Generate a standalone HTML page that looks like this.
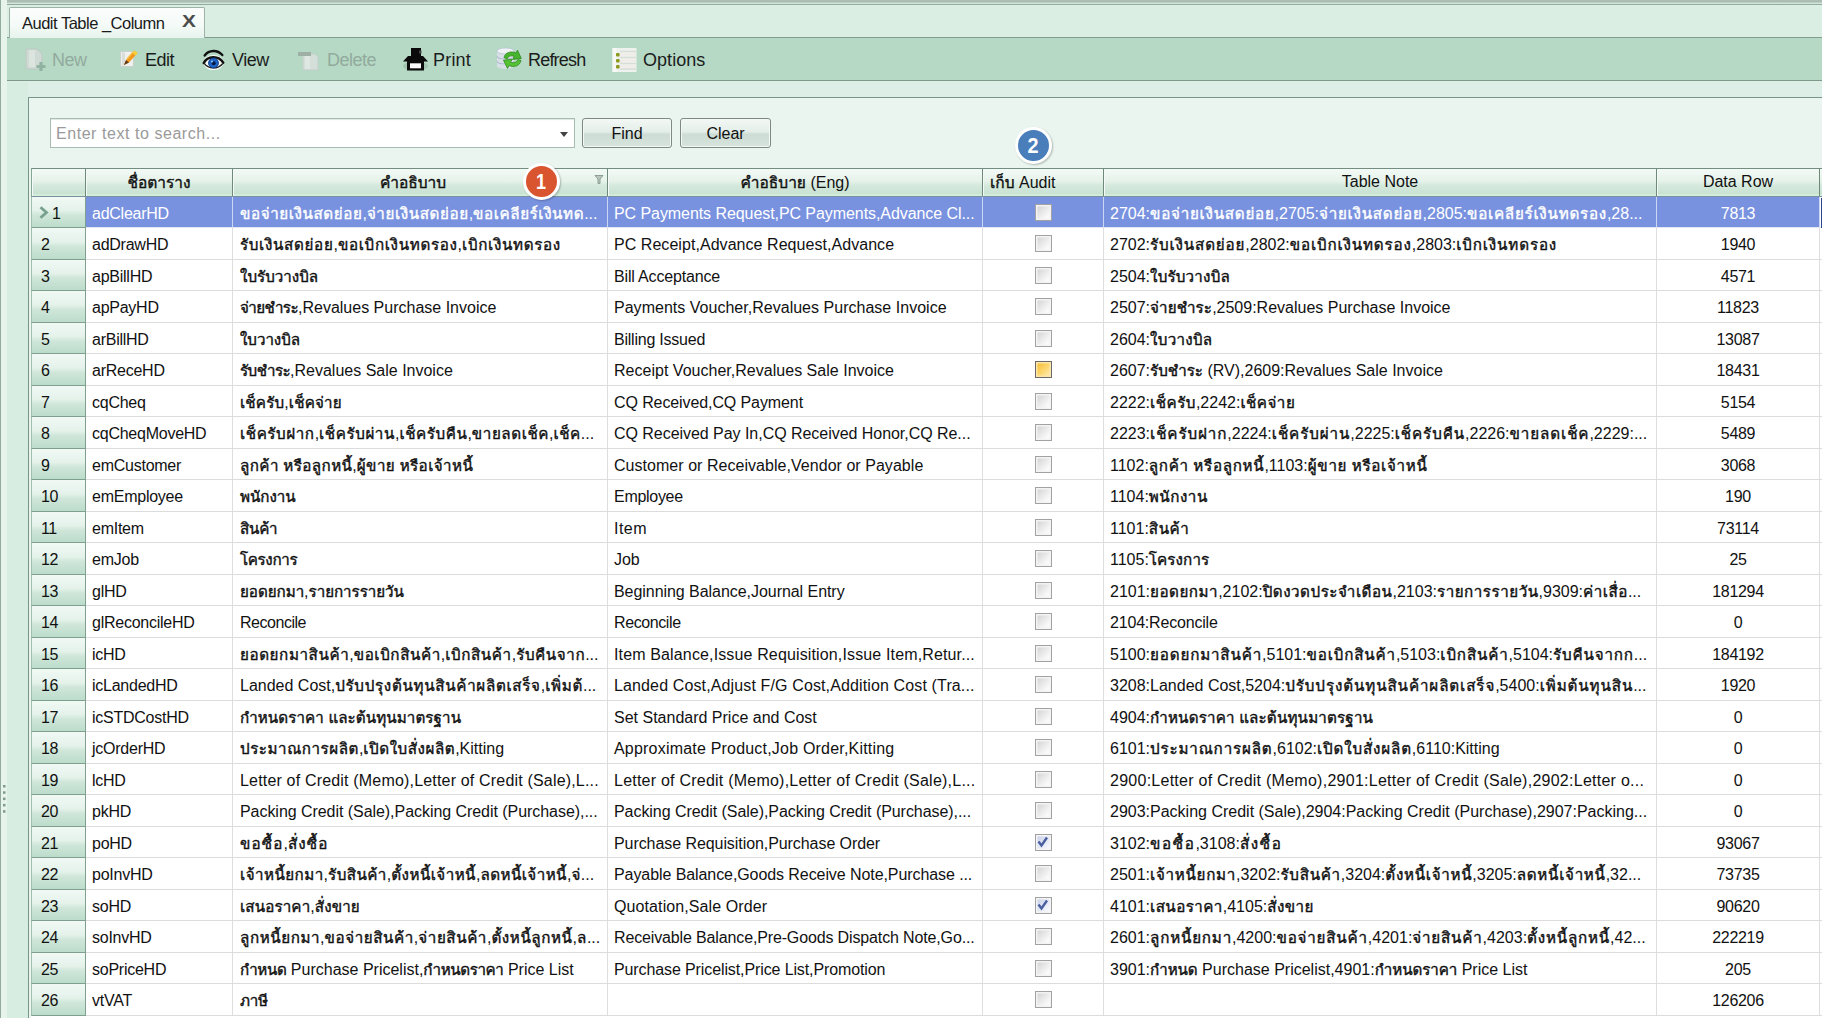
<!DOCTYPE html>
<html lang="th"><head><meta charset="utf-8"><title>Audit Table _Column</title>
<style>
*{box-sizing:border-box;margin:0;padding:0}
html,body{width:1822px;height:1018px;overflow:hidden;background:#dceee5}
body{position:relative;font-family:"Liberation Sans","Loma","Noto Sans Thai UI","Noto Sans Thai",sans-serif;font-size:16px;color:#111;letter-spacing:0}
.abs{position:absolute}
#topstrip{left:0;top:0;width:1822px;height:5px;background:linear-gradient(#aebfb5 0,#a9bbb0 45%,#cfe2d8 55%,#d5e8dd 80%,#93ab9e 82%)}
#tabbar{left:6px;top:5px;width:1816px;height:33px;background:#dbeee4;border-bottom:1px solid #829c8e}
#tab{left:9px;top:7px;width:196px;height:31px;background:linear-gradient(#fbfdfc,#f4faf7 60%,#e6f3ec);border:1px solid #9db3a7;border-bottom:none;border-radius:2px 2px 0 0}
#tab span{position:absolute;left:12px;top:6px;font-size:16.5px;letter-spacing:-0.5px;color:#1a1a1a}
#tab b{position:absolute;left:171.5px;top:5px;font-size:16px;font-weight:bold;color:#4c4c4c;letter-spacing:0;transform:scaleX(1.3);transform-origin:0 0}
#toolbar{left:6px;top:38px;width:1816px;height:43px;background:#b5d9c4;border-bottom:1.5px solid #7c998a}
.tb{position:absolute;top:50px;font-size:18px;letter-spacing:-0.5px;color:#1c1c1c;line-height:20px;white-space:nowrap}
.tb.dis{color:#93aa9e}
.ico{position:absolute}
#lstrip{left:0;top:0;width:7px;height:1018px;background:#e6f4ec;border-left:1px solid #93aa9e}
#lgut{left:7px;top:82px;width:21px;height:936px;background:#d8ede2}
#panel{left:28px;top:97px;width:1800px;height:930px;background:#eaf5ef;border:1.5px solid #78958a}
#search{left:50px;top:118px;width:525px;height:30px;background:#fff;border:1px solid #a9bcb1;box-shadow:inset 0 1px 1px #dde6e1}
#search span{position:absolute;left:5px;top:6px;color:#9a9a9a;font-size:16px;letter-spacing:0.55px}
#search i{position:absolute;left:509px;top:13px;border:4.5px solid transparent;border-top:5px solid #444;width:0;height:0}
.btn{top:118px;height:30px;border:1px solid #7c8a83;border-radius:3px;background:linear-gradient(#f3f8f5,#e4eee9 45%,#cddcd4 55%,#d6e4dc);text-align:center;line-height:29px;font-size:16px;color:#111;box-shadow:inset 0 0 0 1px #f4f9f6}
#grid{left:31px;top:168px;width:1791px;height:850px;background:#fff}
#hdr{left:0;top:0;width:1791px;height:29px;background:linear-gradient(#f3faf6,#e6f2ea 45%,#d5e9dd 60%,#c8e2d2 92%,#d3ecd9 93%);border-top:1.5px solid #738d7f;border-bottom:1.5px solid #7791a0;border-left:1px solid #86a696}
.h{position:absolute;top:0;height:27px;line-height:28px;text-align:center;border-right:1px solid #6f8a7b;white-space:nowrap;font-size:16px;color:#111;box-shadow:inset 1px 1px 0 #f4faf7}
.r{position:absolute;left:0;width:1791px;border-bottom:1px solid #dcdcdc;background:#fff}
.c{position:absolute;top:0;height:100%;line-height:33px;white-space:nowrap;overflow:hidden;padding-left:6px;border-right:1px solid #dedede}
.ind{left:0;width:55px;letter-spacing:-0.4px;background:linear-gradient(#f1f9f5,#e4f2ea 45%,#cfe6d9 60%,#bcdccb);border-left:1px solid #a3bdaf;border-right:1.5px solid #7fa08f;border-bottom:1px solid #7fa08f;padding-left:9px;height:calc(100% + 1px)}
.ind .arr{position:absolute;left:7px;top:9px}
.t{font-size:15.2px;-webkit-text-stroke:0.42px currentColor}
.ind span{position:absolute;left:9px}
.sel .ind span{left:20px}
.c1{left:55px;width:147px;letter-spacing:-0.25px}
.th{font-size:15.5px;-webkit-text-stroke:0.4px currentColor}
.c2{left:202px;width:375px;padding-left:7px;padding-right:0}
.c3{left:577px;width:375px;padding-right:4px}
.c4{left:952px;width:121px;padding:0}
.c5{left:1073px;width:553px;padding-right:5px}
.c6{left:1626px;width:163px;text-align:center;padding:0;letter-spacing:-0.3px}
.sel{border-bottom-color:#e3e6f0}
.sel .c1,.sel .c2,.sel .c3,.sel .c4,.sel .c5,.sel .c6{background:#7992df;color:#fff;border-right-color:#c9d7f4}
.sel:after{content:"";position:absolute;left:1790px;top:1px;width:2px;height:100%;background:#27458f}
.cb{position:absolute;left:52px;top:7px;width:17px;height:17px;border:1.5px solid #a2a2a2;background:linear-gradient(135deg,#cfcfcf,#f6f6f6 70%,#fff);box-shadow:inset 0 0 0 1.5px #f3f3f3}
.cb svg{position:absolute;left:-1px;top:-1px}
.cb.hot{border-color:#6a6a6a;background:linear-gradient(135deg,#f7b930,#fbd56a 50%,#fff0c0);box-shadow:inset 0 0 0 1.5px #fbe5a8}
.cb.ck{background:linear-gradient(135deg,#c4cde8,#eef1fa 70%,#fff)}
.badge{position:absolute;width:37px;height:37px;border-radius:50%;border:3px solid #fff;color:#fff;font-weight:bold;font-size:22px;text-align:center;line-height:31px;letter-spacing:0;box-shadow:1px 1px 2px rgba(0,0,0,.25)}
</style></head><body>
<div id="topstrip" class="abs"></div>
<div id="tabbar" class="abs"></div>
<div id="toolbar" class="abs"></div>
<div id="lgut" class="abs"></div>
<div id="lstrip" class="abs"></div>
<svg class="abs" style="left:1px;top:783px" width="6" height="32" viewBox="0 0 6 32"><g fill="#7f9b8c"><rect x="2" y="2" width="2.500" height="2.500"/><rect x="2" y="8.300" width="2.500" height="2.500"/><rect x="2" y="14.600" width="2.500" height="2.500"/><rect x="2" y="20.900" width="2.500" height="2.500"/><rect x="2" y="27.200" width="2.500" height="2.500"/></g></svg>
<div id="tab" class="abs"><span>Audit Table _Column</span><b>X</b></div>
<svg class="ico" style="left:24px;top:47px" width="24" height="26" viewBox="0 0 24 26"><path d="M2 2h11l5 5v15H2z" fill="#cfdad4" stroke="#bccac3" stroke-width="1"/><path d="M5 3h6v17H5z" fill="#dbe4df"/><path d="M17 15v9M12.5 19.5h9" stroke="#8fb3a0" stroke-width="3.2" fill="none"/></svg>
<div class="tb dis" style="left:52px">New</div>
<svg class="ico" style="left:118px;top:48px" width="22" height="22" viewBox="0 0 22 22"><path d="M2.5 3.5h13v15h-13z" fill="#eef1ee" stroke="#c9d2cc" stroke-width="1.2"/><path d="M4 4.5h3v13H4z" fill="#d9dedb"/><path d="M6 17l2-5 8.5-9.5 3 2.6L11 14.6z" fill="#f39a1d"/><path d="M14.5 4.8l2-2.3 3 2.6-2 2.3z" fill="#f7d23c"/><path d="M6 17l2-5 3 2.6z" fill="#5a3a22"/><path d="M9 11l6-7" stroke="#fbc04a" stroke-width="1.2"/></svg>
<div class="tb" style="left:145px">Edit</div>
<svg class="ico" style="left:202px;top:47px" width="23" height="25" viewBox="0 0 26 28"><ellipse cx="13" cy="17.5" rx="11.5" ry="8.5" fill="#fff" opacity=".9"/><path d="M3 9.5C8 3 17 2.5 23 9" fill="none" stroke="#111" stroke-width="2.6" stroke-linecap="round"/><path d="M2 18C6 9.5 19 9 24 17.5" fill="none" stroke="#111" stroke-width="2.8" stroke-linecap="round"/><path d="M2.5 18.5C7 25 18 25.5 23.5 18.5" fill="none" stroke="#222" stroke-width="1.5"/><circle cx="13" cy="18" r="5.6" fill="#1d62c4"/><circle cx="13" cy="18" r="5.6" fill="none" stroke="#0d3a86" stroke-width="1"/><circle cx="13.2" cy="18.3" r="2.3" fill="#061a44"/><circle cx="11.3" cy="16.2" r="1.2" fill="#8fc2f5"/></svg>
<div class="tb" style="left:232px">View</div>
<svg class="ico" style="left:296px;top:49px" width="25" height="23" viewBox="0 0 25 23"><path d="M7 5h12l3 3v13H7z" fill="#d4dfd9" stroke="#c3d0c9" stroke-width="1"/><path d="M9 7h5v13H9z" fill="#dfe7e3"/><path d="M2 3h13v4H2z" fill="#9eb0a6"/></svg>
<div class="tb dis" style="left:327px">Delete</div>
<svg class="ico" style="left:402px;top:46px" width="27" height="26" viewBox="0 0 27 26"><ellipse cx="13.5" cy="20" rx="12.5" ry="4.5" fill="#8fb5a2" opacity=".55"/><path d="M9 2h10v9H9z" fill="#0a0a0a"/><path d="M17 4.5h2.5v3H17z" fill="#444"/><path d="M6 10h15l5 5.5H1z" fill="#0a0a0a"/><path d="M5 15h17v9.5H5z" fill="#0a0a0a"/><path d="M8 17.3h11v5H8z" fill="#fafafa"/></svg>
<div class="tb" style="left:433px;letter-spacing:0.2px">Print</div>
<svg class="ico" style="left:495px;top:46px" width="29" height="27" viewBox="0 0 29 27"><path d="M2 5c0-4 17-4 17 0v15c0 4-17 4-17 0z" fill="#d9dfe6"/><ellipse cx="10.500" cy="5" rx="8.500" ry="3" fill="#eef1f5" stroke="#b9c3d0" stroke-width=".8"/><path d="M2 10c0 4 17 4 17 0M2 15c0 4 17 4 17 0" fill="none" stroke="#b5bfd3" stroke-width="1.2"/><path d="M9 11.500c1-5 7-7 12-4.500l1.500-2.800 3.800 8.200-8.600 1 1.600-2.900c-3-1.500-6-.5-7.300 2.500z" fill="#46b42c" stroke="#2d8a1c" stroke-width=".8"/><path d="M26 14.500c-1 5-7 7.500-12 5l-1.500 2.900-4-8.200 8.700-1-1.600 2.900c3 1.500 6 .5 7.300-2.500z" fill="#55c236" stroke="#2d8a1c" stroke-width=".8"/></svg>
<div class="tb" style="left:528px;letter-spacing:-0.8px">Refresh</div>
<svg class="ico" style="left:611px;top:47px" width="27" height="26" viewBox="0 0 27 26"><path d="M1.500 1h24v24h-24z" fill="#eef2ee"/><path d="M1.500 1h4v24h-4z" fill="#f7f9f6"/><path d="M9 4.500h16M9 10.500h16M9 16.500h16M9 22h16" stroke="#d9ddd6" stroke-width="1.6"/><path d="M9 7.500h16M9 13.500h16M9 19.500h16" stroke="#f3e9e6" stroke-width="1.400"/><rect x="5" y="6" width="3.600" height="3.600" rx="1" fill="#8c9a1e"/><rect x="5" y="12" width="3.600" height="3.600" rx="1" fill="#8c9a1e"/><rect x="5" y="18" width="3.600" height="3.600" rx="1" fill="#8c9a1e"/></svg>
<div class="tb" style="left:643px;letter-spacing:0.05px">Options</div>

<div id="panel" class="abs"></div>
<div id="search" class="abs"><span>Enter text to search...</span><i></i></div>
<div class="abs btn" style="left:582px;width:90px">Find</div>
<div class="abs btn" style="left:680px;width:91px">Clear</div>
<div id="grid" class="abs">
<div id="hdr" class="abs">
<div class="h" style="left:0;width:54px"></div>
<div class="h" style="left:54px;width:147px"><span class="t th">ชื่อตาราง</span></div>
<div class="h" style="left:201px;width:375px"><span class="t th" style="position:relative;left:-7px">คำอธิบาบ</span><svg style="position:absolute;left:361px;top:5px" width="10" height="11" viewBox="0 0 10 11"><path d="M1 1.500h8l-3 3.500v4.500h-2v-4.500z" fill="#b9c7bf" stroke="#8d9f95" stroke-width="1"/></svg></div>
<div class="h" style="left:576px;width:375px"><span class="t th">คำอธิบาย</span> (Eng)</div>
<div class="h" style="left:951px;width:121px;text-align:left;padding-left:7px"><span class="t th">เก็บ</span> Audit</div>
<div class="h" style="left:1072px;width:553px;line-height:25px">Table Note</div>
<div class="h" style="left:1625px;width:163px;line-height:25px">Data Row</div>
</div>
<div class="r sel" style="top:29px;height:31px"><div class="c ind"><svg class="arr" viewBox="0 0 10 13" width="10" height="13"><path d="M1.500 1.200 L7.500 6.500 L1.500 11.800" fill="none" stroke="#77a18c" stroke-width="2.800"/></svg><span>1</span></div><div class="c c1">adClearHD</div><div class="c c2"><span class="t" style="letter-spacing:0.58px">ขอจ่ายเงินสดย่อย</span>,<span class="t" style="letter-spacing:0.58px">จ่ายเงินสดย่อย</span>,<span class="t" style="letter-spacing:0.58px">ขอเคลียร์เงินทด</span>...</div><div class="c c3" style="letter-spacing:-0.07px">PC Payments Request,PC Payments,Advance Cl...</div><div class="c c4"><i class="cb"></i></div><div class="c c5">2704:<span class="t" style="letter-spacing:0.74px">ขอจ่ายเงินสดย่อย</span>,2705:<span class="t" style="letter-spacing:0.74px">จ่ายเงินสดย่อย</span>,2805:<span class="t" style="letter-spacing:0.74px">ขอเคลียร์เงินทดรอง</span>,28...</div><div class="c c6">7813</div></div>
<div class="r" style="top:60px;height:32px"><div class="c ind"><span>2</span></div><div class="c c1">adDrawHD</div><div class="c c2"><span class="t" style="letter-spacing:0.66px">รับเงินสดย่อย</span>,<span class="t" style="letter-spacing:0.66px">ขอเบิกเงินทดรอง</span>,<span class="t" style="letter-spacing:0.66px">เบิกเงินทดรอง</span></div><div class="c c3" style="letter-spacing:0.05px">PC Receipt,Advance Request,Advance</div><div class="c c4"><i class="cb"></i></div><div class="c c5">2702:<span class="t" style="letter-spacing:0.84px">รับเงินสดย่อย</span>,2802:<span class="t" style="letter-spacing:0.84px">ขอเบิกเงินทดรอง</span>,2803:<span class="t" style="letter-spacing:0.84px">เบิกเงินทดรอง</span></div><div class="c c6">1940</div></div>
<div class="r" style="top:92px;height:31px"><div class="c ind"><span>3</span></div><div class="c c1">apBillHD</div><div class="c c2"><span class="t" style="letter-spacing:-0.02px">ใบรับวางบิล</span></div><div class="c c3" style="letter-spacing:-0.16px">Bill Acceptance</div><div class="c c4"><i class="cb"></i></div><div class="c c5">2504:<span class="t" style="letter-spacing:0.18px">ใบรับวางบิล</span></div><div class="c c6">4571</div></div>
<div class="r" style="top:123px;height:32px"><div class="c ind"><span>4</span></div><div class="c c1">apPayHD</div><div class="c c2"><span class="t" style="letter-spacing:-0.58px">จ่ายชำระ</span>,Revalues Purchase Invoice</div><div class="c c3" style="letter-spacing:0.02px">Payments Voucher,Revalues Purchase Invoice</div><div class="c c4"><i class="cb"></i></div><div class="c c5">2507:<span class="t" style="letter-spacing:0.1px">จ่ายชำระ</span>,2509:Revalues Purchase Invoice</div><div class="c c6">11823</div></div>
<div class="r" style="top:155px;height:31px"><div class="c ind"><span>5</span></div><div class="c c1">arBillHD</div><div class="c c2"><span class="t" style="letter-spacing:-0.06px">ใบวางบิล</span></div><div class="c c3" style="letter-spacing:-0.23px">Billing Issued</div><div class="c c4"><i class="cb"></i></div><div class="c c5">2604:<span class="t" style="letter-spacing:0.27px">ใบวางบิล</span></div><div class="c c6">13087</div></div>
<div class="r" style="top:186px;height:32px"><div class="c ind"><span>6</span></div><div class="c c1">arReceHD</div><div class="c c2"><span class="t" style="letter-spacing:-0.58px">รับชำระ</span>,Revalues Sale Invoice</div><div class="c c3" style="letter-spacing:0.02px">Receipt Voucher,Revalues Sale Invoice</div><div class="c c4"><i class="cb hot"></i></div><div class="c c5">2607:<span class="t">รับชำระ</span> (RV),2609:Revalues Sale Invoice</div><div class="c c6">18431</div></div>
<div class="r" style="top:218px;height:31px"><div class="c ind"><span>7</span></div><div class="c c1">cqCheq</div><div class="c c2"><span class="t" style="letter-spacing:0.18px">เช็ครับ</span>,<span class="t" style="letter-spacing:0.18px">เช็คจ่าย</span></div><div class="c c3" style="letter-spacing:-0.1px">CQ Received,CQ Payment</div><div class="c c4"><i class="cb"></i></div><div class="c c5">2222:<span class="t" style="letter-spacing:0.48px">เช็ครับ</span>,2242:<span class="t" style="letter-spacing:0.48px">เช็คจ่าย</span></div><div class="c c6">5154</div></div>
<div class="r" style="top:249px;height:32px"><div class="c ind"><span>8</span></div><div class="c c1">cqCheqMoveHD</div><div class="c c2"><span class="t" style="letter-spacing:0.57px">เช็ครับฝาก</span>,<span class="t" style="letter-spacing:0.57px">เช็ครับผ่าน</span>,<span class="t" style="letter-spacing:0.57px">เช็ครับคืน</span>,<span class="t" style="letter-spacing:0.57px">ขายลดเช็ค</span>,<span class="t" style="letter-spacing:0.57px">เช็ค</span>...</div><div class="c c3" style="letter-spacing:-0.04px">CQ Received Pay In,CQ Received Honor,CQ Re...</div><div class="c c4"><i class="cb"></i></div><div class="c c5">2223:<span class="t" style="letter-spacing:0.9px">เช็ครับฝาก</span>,2224:<span class="t" style="letter-spacing:0.9px">เช็ครับผ่าน</span>,2225:<span class="t" style="letter-spacing:0.9px">เช็ครับคืน</span>,2226:<span class="t" style="letter-spacing:0.9px">ขายลดเช็ค</span>,2229:...</div><div class="c c6">5489</div></div>
<div class="r" style="top:281px;height:31px"><div class="c ind"><span>9</span></div><div class="c c1">emCustomer</div><div class="c c2"><span class="t" style="letter-spacing:0.41px">ลูกค้า</span> <span class="t" style="letter-spacing:0.41px">หรือลูกหนี้</span>,<span class="t" style="letter-spacing:0.41px">ผู้ขาย</span> <span class="t" style="letter-spacing:0.41px">หรือเจ้าหนี้</span></div><div class="c c3" style="letter-spacing:0.04px">Customer or Receivable,Vendor or Payable</div><div class="c c4"><i class="cb"></i></div><div class="c c5">1102:<span class="t" style="letter-spacing:0.7px">ลูกค้า</span> <span class="t" style="letter-spacing:0.7px">หรือลูกหนี้</span>,1103:<span class="t" style="letter-spacing:0.7px">ผู้ขาย</span> <span class="t" style="letter-spacing:0.7px">หรือเจ้าหนี้</span></div><div class="c c6">3068</div></div>
<div class="r" style="top:312px;height:32px"><div class="c ind"><span>10</span></div><div class="c c1">emEmployee</div><div class="c c2"><span class="t" style="letter-spacing:-0.04px">พนักงาน</span></div><div class="c c3" style="letter-spacing:-0.29px">Employee</div><div class="c c4"><i class="cb"></i></div><div class="c c5">1104:<span class="t" style="letter-spacing:0.5px">พนักงาน</span></div><div class="c c6">190</div></div>
<div class="r" style="top:344px;height:31px"><div class="c ind"><span>11</span></div><div class="c c1">emItem</div><div class="c c2"><span class="t" style="letter-spacing:-0.24px">สินค้า</span></div><div class="c c3" style="letter-spacing:0.49px">Item</div><div class="c c4"><i class="cb"></i></div><div class="c c5">1101:<span class="t" style="letter-spacing:0.52px">สินค้า</span></div><div class="c c6">73114</div></div>
<div class="r" style="top:375px;height:32px"><div class="c ind"><span>12</span></div><div class="c c1">emJob</div><div class="c c2"><span class="t" style="letter-spacing:-0.37px">โครงการ</span></div><div class="c c3" style="letter-spacing:-0.1px">Job</div><div class="c c4"><i class="cb"></i></div><div class="c c5">1105:<span class="t" style="letter-spacing:0.09px">โครงการ</span></div><div class="c c6">25</div></div>
<div class="r" style="top:407px;height:31px"><div class="c ind"><span>13</span></div><div class="c c1">glHD</div><div class="c c2"><span class="t" style="letter-spacing:-0.06px">ยอดยกมา</span>,<span class="t" style="letter-spacing:-0.06px">รายการรายวัน</span></div><div class="c c3" style="letter-spacing:-0.05px">Beginning Balance,Journal Entry</div><div class="c c4"><i class="cb"></i></div><div class="c c5">2101:<span class="t" style="letter-spacing:0.51px">ยอดยกมา</span>,2102:<span class="t" style="letter-spacing:0.51px">ปิดงวดประจำเดือน</span>,2103:<span class="t" style="letter-spacing:0.51px">รายการรายวัน</span>,9309:<span class="t" style="letter-spacing:0.51px">ค่าเสื่อ</span>...</div><div class="c c6">181294</div></div>
<div class="r" style="top:438px;height:32px"><div class="c ind"><span>14</span></div><div class="c c1">glReconcileHD</div><div class="c c2" style="letter-spacing:-0.47px">Reconcile</div><div class="c c3" style="letter-spacing:-0.4px">Reconcile</div><div class="c c4"><i class="cb"></i></div><div class="c c5" style="letter-spacing:-0.19px">2104:Reconcile</div><div class="c c6">0</div></div>
<div class="r" style="top:470px;height:31px"><div class="c ind"><span>15</span></div><div class="c c1">icHD</div><div class="c c2"><span class="t" style="letter-spacing:0.58px">ยอดยกมาสินค้า</span>,<span class="t" style="letter-spacing:0.58px">ขอเบิกสินค้า</span>,<span class="t" style="letter-spacing:0.58px">เบิกสินค้า</span>,<span class="t" style="letter-spacing:0.58px">รับคืนจาก</span>...</div><div class="c c3" style="letter-spacing:0.14px">Item Balance,Issue Requisition,Issue Item,Retur...</div><div class="c c4"><i class="cb"></i></div><div class="c c5">5100:<span class="t" style="letter-spacing:0.83px">ยอดยกมาสินค้า</span>,5101:<span class="t" style="letter-spacing:0.83px">ขอเบิกสินค้า</span>,5103:<span class="t" style="letter-spacing:0.83px">เบิกสินค้า</span>,5104:<span class="t" style="letter-spacing:0.83px">รับคืนจากก</span>...</div><div class="c c6">184192</div></div>
<div class="r" style="top:501px;height:32px"><div class="c ind"><span>16</span></div><div class="c c1">icLandedHD</div><div class="c c2">Landed Cost,<span class="t" style="letter-spacing:0.68px">ปรับปรุงต้นทุนสินค้าผลิตเสร็จ</span>,<span class="t" style="letter-spacing:0.68px">เพิ่มต้</span>...</div><div class="c c3" style="letter-spacing:0.13px">Landed Cost,Adjust F/G Cost,Addition Cost (Tra...</div><div class="c c4"><i class="cb"></i></div><div class="c c5">3208:Landed Cost,5204:<span class="t" style="letter-spacing:0.89px">ปรับปรุงต้นทุนสินค้าผลิตเสร็จ</span>,5400:<span class="t" style="letter-spacing:0.89px">เพิ่มต้นทุนสิน</span>...</div><div class="c c6">1920</div></div>
<div class="r" style="top:533px;height:31px"><div class="c ind"><span>17</span></div><div class="c c1">icSTDCostHD</div><div class="c c2"><span class="t" style="letter-spacing:0.07px">กำหนดราคา</span> <span class="t" style="letter-spacing:0.07px">และต้นทุนมาตรฐาน</span></div><div class="c c3">Set Standard Price and Cost</div><div class="c c4"><i class="cb"></i></div><div class="c c5">4904:<span class="t" style="letter-spacing:0.16px">กำหนดราคา</span> <span class="t" style="letter-spacing:0.16px">และต้นทุนมาตรฐาน</span></div><div class="c c6">0</div></div>
<div class="r" style="top:564px;height:32px"><div class="c ind"><span>18</span></div><div class="c c1">jcOrderHD</div><div class="c c2"><span class="t" style="letter-spacing:0.53px">ประมาณการผลิต</span>,<span class="t" style="letter-spacing:0.53px">เปิดใบสั่งผลิต</span>,Kitting</div><div class="c c3" style="letter-spacing:0.2px">Approximate Product,Job Order,Kitting</div><div class="c c4"><i class="cb"></i></div><div class="c c5">6101:<span class="t" style="letter-spacing:0.83px">ประมาณการผลิต</span>,6102:<span class="t" style="letter-spacing:0.83px">เปิดใบสั่งผลิต</span>,6110:Kitting</div><div class="c c6">0</div></div>
<div class="r" style="top:596px;height:31px"><div class="c ind"><span>19</span></div><div class="c c1">lcHD</div><div class="c c2" style="letter-spacing:0.18px">Letter of Credit (Memo),Letter of Credit (Sale),L...</div><div class="c c3" style="letter-spacing:0.23px">Letter of Credit (Memo),Letter of Credit (Sale),L...</div><div class="c c4"><i class="cb"></i></div><div class="c c5" style="letter-spacing:0.26px">2900:Letter of Credit (Memo),2901:Letter of Credit (Sale),2902:Letter o...</div><div class="c c6">0</div></div>
<div class="r" style="top:627px;height:32px"><div class="c ind"><span>20</span></div><div class="c c1">pkHD</div><div class="c c2" style="letter-spacing:-0.05px">Packing Credit (Sale),Packing Credit (Purchase),...</div><div class="c c3" style="letter-spacing:-0.06px">Packing Credit (Sale),Packing Credit (Purchase),...</div><div class="c c4"><i class="cb"></i></div><div class="c c5">2903:Packing Credit (Sale),2904:Packing Credit (Purchase),2907:Packing...</div><div class="c c6">0</div></div>
<div class="r" style="top:659px;height:31px"><div class="c ind"><span>21</span></div><div class="c c1">poHD</div><div class="c c2"><span class="t" style="letter-spacing:1.12px">ขอซื้อ</span>,<span class="t" style="letter-spacing:1.12px">สั่งซื้อ</span></div><div class="c c3" style="letter-spacing:-0.07px">Purchase Requisition,Purchase Order</div><div class="c c4"><i class="cb ck"><svg viewBox="0 0 16 16" width="16" height="16"><path d="M3.5 7.5 L6.5 11.5 L12 3.5" fill="none" stroke="#4a5f9e" stroke-width="2.4"/></svg></i></div><div class="c c5">3102:<span class="t" style="letter-spacing:1.6px">ขอซื้อ</span>,3108:<span class="t" style="letter-spacing:1.6px">สั่งซื้อ</span></div><div class="c c6">93067</div></div>
<div class="r" style="top:690px;height:32px"><div class="c ind"><span>22</span></div><div class="c c1">poInvHD</div><div class="c c2"><span class="t" style="letter-spacing:0.44px">เจ้าหนี้ยกมา</span>,<span class="t" style="letter-spacing:0.44px">รับสินค้า</span>,<span class="t" style="letter-spacing:0.44px">ตั้งหนี้เจ้าหนี้</span>,<span class="t" style="letter-spacing:0.44px">ลดหนี้เจ้าหนี้</span>,<span class="t" style="letter-spacing:0.44px">จ่</span>...</div><div class="c c3" style="letter-spacing:-0.08px">Payable Balance,Goods Receive Note,Purchase ...</div><div class="c c4"><i class="cb"></i></div><div class="c c5">2501:<span class="t" style="letter-spacing:0.7px">เจ้าหนี้ยกมา</span>,3202:<span class="t" style="letter-spacing:0.7px">รับสินค้า</span>,3204:<span class="t" style="letter-spacing:0.7px">ตั้งหนี้เจ้าหนี้</span>,3205:<span class="t" style="letter-spacing:0.7px">ลดหนี้เจ้าหนี้</span>,32...</div><div class="c c6">73735</div></div>
<div class="r" style="top:722px;height:31px"><div class="c ind"><span>23</span></div><div class="c c1">soHD</div><div class="c c2"><span class="t" style="letter-spacing:0.12px">เสนอราคา</span>,<span class="t" style="letter-spacing:0.12px">สั่งขาย</span></div><div class="c c3" style="letter-spacing:0.1px">Quotation,Sale Order</div><div class="c c4"><i class="cb ck"><svg viewBox="0 0 16 16" width="16" height="16"><path d="M3.5 7.5 L6.5 11.5 L12 3.5" fill="none" stroke="#4a5f9e" stroke-width="2.4"/></svg></i></div><div class="c c5">4101:<span class="t" style="letter-spacing:0.42px">เสนอราคา</span>,4105:<span class="t" style="letter-spacing:0.42px">สั่งขาย</span></div><div class="c c6">90620</div></div>
<div class="r" style="top:753px;height:32px"><div class="c ind"><span>24</span></div><div class="c c1">soInvHD</div><div class="c c2"><span class="t" style="letter-spacing:0.57px">ลูกหนี้ยกมา</span>,<span class="t" style="letter-spacing:0.57px">ขอจ่ายสินค้า</span>,<span class="t" style="letter-spacing:0.57px">จ่ายสินค้า</span>,<span class="t" style="letter-spacing:0.57px">ตั้งหนี้ลูกหนี้</span>,<span class="t" style="letter-spacing:0.57px">ล</span>...</div><div class="c c3" style="letter-spacing:-0.14px">Receivable Balance,Pre-Goods Dispatch Note,Go...</div><div class="c c4"><i class="cb"></i></div><div class="c c5">2601:<span class="t" style="letter-spacing:0.8px">ลูกหนี้ยกมา</span>,4200:<span class="t" style="letter-spacing:0.8px">ขอจ่ายสินค้า</span>,4201:<span class="t" style="letter-spacing:0.8px">จ่ายสินค้า</span>,4203:<span class="t" style="letter-spacing:0.8px">ตั้งหนี้ลูกหนี้</span>,42...</div><div class="c c6">222219</div></div>
<div class="r" style="top:785px;height:31px"><div class="c ind"><span>25</span></div><div class="c c1">soPriceHD</div><div class="c c2"><span class="t" style="letter-spacing:-0.4px">กำหนด</span> Purchase Pricelist,<span class="t" style="letter-spacing:-0.4px">กำหนดราคา</span> Price List</div><div class="c c3" style="letter-spacing:-0.11px">Purchase Pricelist,Price List,Promotion</div><div class="c c4"><i class="cb"></i></div><div class="c c5">3901:<span class="t" style="letter-spacing:-0.1px">กำหนด</span> Purchase Pricelist,4901:<span class="t" style="letter-spacing:-0.1px">กำหนดราคา</span> Price List</div><div class="c c6">205</div></div>
<div class="r" style="top:816px;height:32px"><div class="c ind"><span>26</span></div><div class="c c1">vtVAT</div><div class="c c2"><span class="t" style="letter-spacing:-0.32px">ภาษี</span></div><div class="c c3"></div><div class="c c4"><i class="cb"></i></div><div class="c c5"></div><div class="c c6">126206</div></div>
</div>
<div class="badge" style="left:523px;top:163px;background:#d9552f"><span style="display:inline-block;transform:scaleX(.82)">1</span></div>
<div class="badge" style="left:1015px;top:127px;background:#4a7ebb"><span style="display:inline-block;transform:scaleX(.9)">2</span></div>
</body></html>
